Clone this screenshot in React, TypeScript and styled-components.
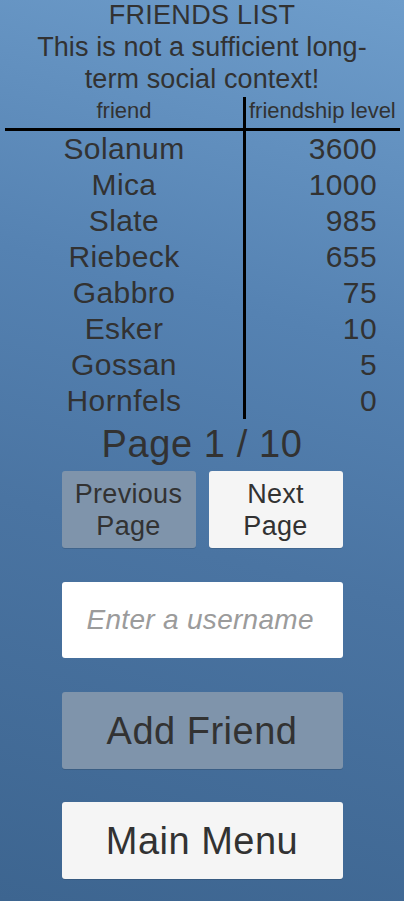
import React, {useState} from "react";
import styled, {createGlobalStyle} from "styled-components";

const GlobalStyle = createGlobalStyle`
  html, body {
    margin: 0;
    padding: 0;
  }
  body {
    font-family: "Liberation Sans", Arial, sans-serif;
    color: #323232;
  }
`;

const Screen = styled.div`
  width: 404px;
  height: 901px;
  overflow: hidden;
  display: flex;
  flex-direction: column;
  align-items: center;
  background: linear-gradient(195deg, #6e9dcb 0%, #5582b2 35%, #4a74a2 60%, #3d6590 100%);
`;

const Title = styled.h1`
  margin: 0;
  font-size: 27px;
  font-weight: normal;
  letter-spacing: 0.3px;
  line-height: 31px;
  text-align: center;
`;

const Subtitle = styled.p`
  margin: 0;
  width: 344px;
  font-size: 27px;
  letter-spacing: 0.1px;
  line-height: 32px;
  text-align: center;
`;

const Table = styled.div`
  align-self: stretch;
  margin: 2px 4px 0 5px;
  display: grid;
  grid-template-columns: 241px 1fr;
`;

const Cell = styled.div<{ $side: "left" | "right"; $head?: boolean }>`
  border-right: ${p => p.$side === "left" ? "3px solid #000" : "none"};
  border-bottom: ${p => p.$head ? "3px solid #000" : "none"};
  font-size: ${p => p.$head ? "22px" : "30px"};
  letter-spacing: ${p => p.$head ? "0" : "0.4px"};
  line-height: ${p => p.$head ? "28px" : "36px"};
  padding-bottom: ${p => p.$head ? "3px" : "0"};
  padding-right: ${p => p.$side === "right" && !p.$head ? "23px" : "0"};
  padding-left: ${p => p.$side === "right" && p.$head ? "3px" : "0"};
  text-align: ${p => p.$side === "left" ? "center" : p.$head ? "left" : "right"};
  white-space: nowrap;
`;

const PageLabel = styled.div`
  font-size: 38px;
  letter-spacing: 0.6px;
  line-height: 50px;
  text-align: center;
`;

const Pager = styled.div`
  margin-top: 2px;
  display: flex;
  gap: 13px;
`;

const Button = styled.button<{ $dim?: boolean; $wide?: boolean; $big?: boolean }>`
  width: ${p => p.$wide ? "281px" : "134px"};
  height: 77px;
  margin: 0;
  padding: 0;
  border: none;
  border-radius: 3px;
  background: ${p => p.$dim ? "#7f94ab" : "#f5f5f5"};
  box-shadow: 0 1px 0 rgba(0, 0, 0, 0.12);
  color: #323232;
  font-family: "Liberation Sans", Arial, sans-serif;
  font-size: ${p => p.$big ? "38px" : "27px"};
  letter-spacing: ${p => p.$big ? "0.5px" : "0.3px"};
  line-height: 32px;
  text-align: center;
`;

const NameInput = styled.input`
  box-sizing: border-box;
  width: 281px;
  height: 76px;
  margin-top: 34px;
  padding: 0 0 0 25px;
  border: none;
  border-radius: 3px;
  background: #ffffff;
  color: #323232;
  font-family: "Liberation Sans", Arial, sans-serif;
  font-size: 28px;
  letter-spacing: 0.3px;
  outline: none;
  &::placeholder {
    color: #9b9b9b;
    font-style: italic;
  }
`;

const Spaced = styled.div<{ $top: number }>`
  margin-top: ${p => p.$top}px;
`;

const friends: [string, number][] = [
  ["Solanum", 3600],
  ["Mica", 1000],
  ["Slate", 985],
  ["Riebeck", 655],
  ["Gabbro", 75],
  ["Esker", 10],
  ["Gossan", 5],
  ["Hornfels", 0],
];

function App() {
  const [username, setUsername] = useState("");
  return (
    <Screen>
      <GlobalStyle/>
      <Title>FRIENDS LIST</Title>
      <Subtitle>This is not a sufficient long-term social context!</Subtitle>
      <Table>
        <Cell $side="left" $head>friend</Cell>
        <Cell $side="right" $head>friendship level</Cell>
        {friends.map(([name, level]) =>
          <React.Fragment key={name}>
            <Cell $side="left">{name}</Cell>
            <Cell $side="right">{level}</Cell>
          </React.Fragment>
        )}
      </Table>
      <PageLabel>Page 1 / 10</PageLabel>
      <Pager>
        <Button $dim>Previous<br/>Page</Button>
        <Button>Next<br/>Page</Button>
      </Pager>
      <NameInput placeholder="Enter a username" value={username}
                 onChange={e => setUsername(e.target.value)}/>
      <Spaced $top={34}>
        <Button $dim $wide $big>Add Friend</Button>
      </Spaced>
      <Spaced $top={33}>
        <Button $wide $big>Main Menu</Button>
      </Spaced>
    </Screen>
  );
}

export default App;
